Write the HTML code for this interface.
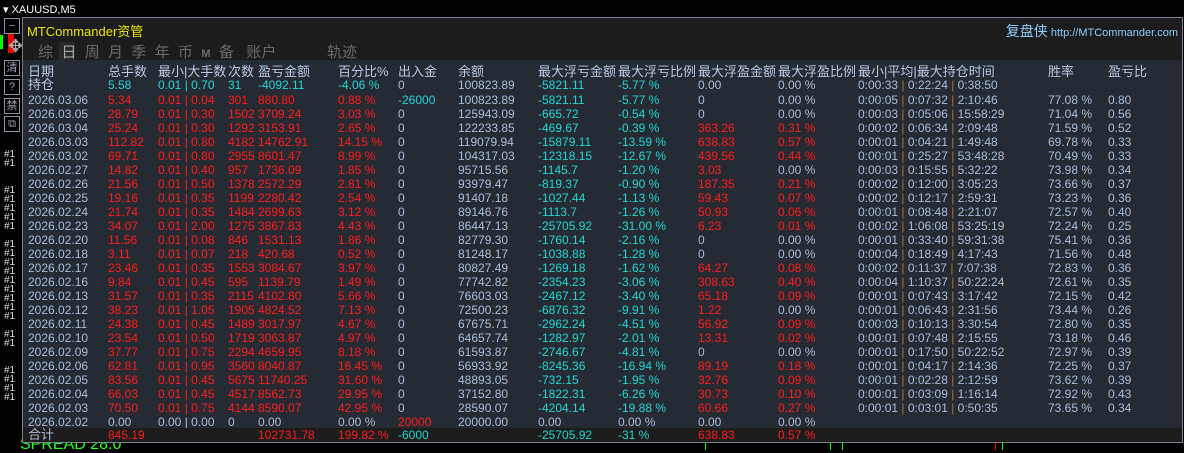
<!DOCTYPE html>
<html><head><meta charset="utf-8"><style>
*{margin:0;padding:0;box-sizing:border-box}
body{width:1184px;height:450px;background:#000;position:relative;overflow:hidden;font-family:"Liberation Sans","Noto Sans CJK SC",sans-serif;font-size:12px;color:#a9bdd8}
.abs{position:absolute;white-space:nowrap}
#panel{position:absolute;left:22px;top:17px;width:1161px;height:426px;border:1px solid #7a8290;background:#1c1c1c}
#tbl{position:absolute;left:0;top:42px;width:1159px;height:368px;background:#262b33}
#foot{position:absolute;left:0;top:410px;width:1159px;height:14px;background:#1c1c1c}
.r{position:absolute;left:0;height:14px;line-height:14px;width:1159px}
.r span{position:absolute;white-space:nowrap}
.a{left:5px}.b{left:85px}.c{left:135px}.d{left:205px}.e{left:235px}.f{left:315px}.g{left:375px}.h{left:435px}.i{left:515px}.j{left:595px}.k{left:675px}.l{left:755px}.m{left:835px}.n{left:1025px}.o{left:1085px}
.R{color:#ff1a1a}.C{color:#1fd6d6}
.p{color:#b07030;font-style:normal}
.hd{font-size:13px;color:#b8c8e0}
.tab{color:#6a6a6a;font-size:15px}
.btn{position:absolute;left:4px;width:16px;height:16px;border:1px solid #8a94a4;color:#9aa4b4;font-size:11px;line-height:14px;text-align:center;background:#000}
</style></head><body>
<div class="abs" style="left:3px;top:3px;color:#fff;font-size:11px">▾ XAUUSD,M5</div>
<div class="abs" style="left:0;top:35px;width:3px;height:14px;background:#0f0"></div>
<div class="abs" style="left:8px;top:33px;width:6px;height:20px;background:#e00"></div>
<div class="abs" style="left:8px;top:36px;color:#aaa;font-size:18px">✥</div>
<div class="btn" style="top:18px">−</div>
<div class="btn" style="top:60px">清</div>
<div class="btn" style="top:79px">?</div>
<div class="btn" style="top:98px">禁</div>
<div class="btn" style="top:116px">⧉</div>
<div class="abs" style="left:4px;top:150px;color:#ddd;font-size:10px;line-height:9px">#1<br>#1<br><br><br>#1<br>#1<br>#1<br>#1<br>#1<br><br>#1<br>#1<br>#1<br>#1<br>#1<br>#1<br>#1<br>#1<br>#1<br><br>#1<br>#1<br><br><br>#1<br>#1<br>#1<br>#1</div>
<div class="abs" style="left:20px;top:438px;color:#2f2;font-size:16px;line-height:14px">SPREAD 28.0</div>
<div class="abs" style="left:705px;top:443px;width:1px;height:7px;background:#0f0"></div>
<div class="abs" style="left:830px;top:443px;width:1px;height:7px;background:#0f0"></div>
<div class="abs" style="left:842px;top:443px;width:1px;height:7px;background:#0f0"></div>
<div class="abs" style="left:995px;top:443px;width:1px;height:7px;background:#f00"></div>
<div class="abs" style="left:1002px;top:443px;width:1px;height:7px;background:#0f0"></div>
<div id="panel">
<div class="abs" style="left:4px;top:3px;color:#e8e800;font-size:13px">MTCommander资管</div>
<div class="abs" style="right:4px;top:3px;color:#8ecbff;font-size:11px"><span style="font-size:14px">复盘侠</span> http://MTCommander.com</div>
<div class="abs" style="left:36px;top:24px;width:16px;height:18px;background:#2a2a2a"></div>
<div class="abs tab" style="left:15px;top:23px">综&nbsp;&nbsp;<span style="color:#9aa">日</span>&nbsp;&nbsp;周&nbsp;&nbsp;月&nbsp;&nbsp;季&nbsp;&nbsp;年&nbsp;&nbsp;币&nbsp;&nbsp;<b style="font-size:11px">M</b>&nbsp;&nbsp;备&nbsp;&nbsp;&nbsp;账户</div>
<div class="abs tab" style="left:304px;top:23px">轨迹</div>
<div id="tbl">
<div class="r hd" style="top:5px"><span class="a">日期</span><span class="b">总手数</span><span class="c">最小|大手数</span><span class="d">次数</span><span class="e">盈亏金额</span><span class="f">百分比%</span><span class="g">出入金</span><span class="h">余额</span><span class="i">最大浮亏金额</span><span class="j">最大浮亏比例</span><span class="k">最大浮盈金额</span><span class="l">最大浮盈比例</span><span class="m">最小|平均|最大持仓时间</span><span class="n">胜率</span><span class="o">盈亏比</span></div>
<div class="r" style="top:18px"><span class="a hd">持仓</span><span class="b C">5.58</span><span class="c C">0.01 | 0.70</span><span class="d C">31</span><span class="e C">-4092.11</span><span class="f C">-4.06 %</span><span class="g">0</span><span class="h">100823.89</span><span class="i C">-5821.11</span><span class="j C">-5.77 %</span><span class="k">0.00</span><span class="l">0.00 %</span><span class="m">0:00:33 <i class="p">|</i> 0:22:24 <i class="p">|</i> 0:38:50</span></div>
<div class="r" style="top:33px"><span class="a">2026.03.06</span><span class="b R">5.34</span><span class="c R">0.01 | 0.04</span><span class="d R">301</span><span class="e R">880.80</span><span class="f R">0.88 %</span><span class="g C">-26000</span><span class="h">100823.89</span><span class="i C">-5821.11</span><span class="j C">-5.77 %</span><span class="k">0</span><span class="l">0.00 %</span><span class="m">0:00:05 <i class="p">|</i> 0:07:32 <i class="p">|</i> 2:10:46</span><span class="n">77.08 %</span><span class="o">0.80</span></div>
<div class="r" style="top:47px"><span class="a">2026.03.05</span><span class="b R">28.79</span><span class="c R">0.01 | 0.30</span><span class="d R">1502</span><span class="e R">3709.24</span><span class="f R">3.03 %</span><span class="g">0</span><span class="h">125943.09</span><span class="i C">-665.72</span><span class="j C">-0.54 %</span><span class="k">0</span><span class="l">0.00 %</span><span class="m">0:00:03 <i class="p">|</i> 0:05:06 <i class="p">|</i> 15:58:29</span><span class="n">71.04 %</span><span class="o">0.56</span></div>
<div class="r" style="top:61px"><span class="a">2026.03.04</span><span class="b R">25.24</span><span class="c R">0.01 | 0.30</span><span class="d R">1292</span><span class="e R">3153.91</span><span class="f R">2.65 %</span><span class="g">0</span><span class="h">122233.85</span><span class="i C">-469.67</span><span class="j C">-0.39 %</span><span class="k R">363.26</span><span class="l R">0.31 %</span><span class="m">0:00:02 <i class="p">|</i> 0:06:34 <i class="p">|</i> 2:09:48</span><span class="n">71.59 %</span><span class="o">0.52</span></div>
<div class="r" style="top:75px"><span class="a">2026.03.03</span><span class="b R">112.82</span><span class="c R">0.01 | 0.80</span><span class="d R">4182</span><span class="e R">14762.91</span><span class="f R">14.15 %</span><span class="g">0</span><span class="h">119079.94</span><span class="i C">-15879.11</span><span class="j C">-13.59 %</span><span class="k R">638.83</span><span class="l R">0.57 %</span><span class="m">0:00:01 <i class="p">|</i> 0:04:21 <i class="p">|</i> 1:49:48</span><span class="n">69.78 %</span><span class="o">0.33</span></div>
<div class="r" style="top:89px"><span class="a">2026.03.02</span><span class="b R">69.71</span><span class="c R">0.01 | 0.80</span><span class="d R">2955</span><span class="e R">8601.47</span><span class="f R">8.99 %</span><span class="g">0</span><span class="h">104317.03</span><span class="i C">-12318.15</span><span class="j C">-12.67 %</span><span class="k R">439.56</span><span class="l R">0.44 %</span><span class="m">0:00:01 <i class="p">|</i> 0:25:27 <i class="p">|</i> 53:48:28</span><span class="n">70.49 %</span><span class="o">0.33</span></div>
<div class="r" style="top:103px"><span class="a">2026.02.27</span><span class="b R">14.82</span><span class="c R">0.01 | 0.40</span><span class="d R">957</span><span class="e R">1736.09</span><span class="f R">1.85 %</span><span class="g">0</span><span class="h">95715.56</span><span class="i C">-1145.7</span><span class="j C">-1.20 %</span><span class="k R">3.03</span><span class="l">0.00 %</span><span class="m">0:00:03 <i class="p">|</i> 0:15:55 <i class="p">|</i> 5:32:22</span><span class="n">73.98 %</span><span class="o">0.34</span></div>
<div class="r" style="top:117px"><span class="a">2026.02.26</span><span class="b R">21.56</span><span class="c R">0.01 | 0.50</span><span class="d R">1378</span><span class="e R">2572.29</span><span class="f R">2.81 %</span><span class="g">0</span><span class="h">93979.47</span><span class="i C">-819.37</span><span class="j C">-0.90 %</span><span class="k R">187.35</span><span class="l R">0.21 %</span><span class="m">0:00:02 <i class="p">|</i> 0:12:00 <i class="p">|</i> 3:05:23</span><span class="n">73.66 %</span><span class="o">0.37</span></div>
<div class="r" style="top:131px"><span class="a">2026.02.25</span><span class="b R">19.16</span><span class="c R">0.01 | 0.35</span><span class="d R">1199</span><span class="e R">2280.42</span><span class="f R">2.54 %</span><span class="g">0</span><span class="h">91407.18</span><span class="i C">-1027.44</span><span class="j C">-1.13 %</span><span class="k R">59.43</span><span class="l R">0.07 %</span><span class="m">0:00:02 <i class="p">|</i> 0:12:17 <i class="p">|</i> 2:59:31</span><span class="n">73.23 %</span><span class="o">0.36</span></div>
<div class="r" style="top:145px"><span class="a">2026.02.24</span><span class="b R">21.74</span><span class="c R">0.01 | 0.35</span><span class="d R">1484</span><span class="e R">2699.63</span><span class="f R">3.12 %</span><span class="g">0</span><span class="h">89146.76</span><span class="i C">-1113.7</span><span class="j C">-1.26 %</span><span class="k R">50.93</span><span class="l R">0.06 %</span><span class="m">0:00:01 <i class="p">|</i> 0:08:48 <i class="p">|</i> 2:21:07</span><span class="n">72.57 %</span><span class="o">0.40</span></div>
<div class="r" style="top:159px"><span class="a">2026.02.23</span><span class="b R">34.07</span><span class="c R">0.01 | 2.00</span><span class="d R">1275</span><span class="e R">3867.83</span><span class="f R">4.43 %</span><span class="g">0</span><span class="h">86447.13</span><span class="i C">-25705.92</span><span class="j C">-31.00 %</span><span class="k R">6.23</span><span class="l R">0.01 %</span><span class="m">0:00:02 <i class="p">|</i> 1:06:08 <i class="p">|</i> 53:25:19</span><span class="n">72.24 %</span><span class="o">0.25</span></div>
<div class="r" style="top:173px"><span class="a">2026.02.20</span><span class="b R">11.56</span><span class="c R">0.01 | 0.08</span><span class="d R">846</span><span class="e R">1531.13</span><span class="f R">1.86 %</span><span class="g">0</span><span class="h">82779.30</span><span class="i C">-1760.14</span><span class="j C">-2.16 %</span><span class="k">0</span><span class="l">0.00 %</span><span class="m">0:00:01 <i class="p">|</i> 0:33:40 <i class="p">|</i> 59:31:38</span><span class="n">75.41 %</span><span class="o">0.36</span></div>
<div class="r" style="top:187px"><span class="a">2026.02.18</span><span class="b R">3.11</span><span class="c R">0.01 | 0.07</span><span class="d R">218</span><span class="e R">420.68</span><span class="f R">0.52 %</span><span class="g">0</span><span class="h">81248.17</span><span class="i C">-1038.88</span><span class="j C">-1.28 %</span><span class="k">0</span><span class="l">0.00 %</span><span class="m">0:00:04 <i class="p">|</i> 0:18:49 <i class="p">|</i> 4:17:43</span><span class="n">71.56 %</span><span class="o">0.48</span></div>
<div class="r" style="top:201px"><span class="a">2026.02.17</span><span class="b R">23.46</span><span class="c R">0.01 | 0.35</span><span class="d R">1553</span><span class="e R">3084.67</span><span class="f R">3.97 %</span><span class="g">0</span><span class="h">80827.49</span><span class="i C">-1269.18</span><span class="j C">-1.62 %</span><span class="k R">64.27</span><span class="l R">0.08 %</span><span class="m">0:00:02 <i class="p">|</i> 0:11:37 <i class="p">|</i> 7:07:38</span><span class="n">72.83 %</span><span class="o">0.36</span></div>
<div class="r" style="top:215px"><span class="a">2026.02.16</span><span class="b R">9.84</span><span class="c R">0.01 | 0.45</span><span class="d R">595</span><span class="e R">1139.79</span><span class="f R">1.49 %</span><span class="g">0</span><span class="h">77742.82</span><span class="i C">-2354.23</span><span class="j C">-3.06 %</span><span class="k R">308.63</span><span class="l R">0.40 %</span><span class="m">0:00:04 <i class="p">|</i> 1:10:37 <i class="p">|</i> 50:22:24</span><span class="n">72.61 %</span><span class="o">0.35</span></div>
<div class="r" style="top:229px"><span class="a">2026.02.13</span><span class="b R">31.57</span><span class="c R">0.01 | 0.35</span><span class="d R">2115</span><span class="e R">4102.80</span><span class="f R">5.66 %</span><span class="g">0</span><span class="h">76603.03</span><span class="i C">-2467.12</span><span class="j C">-3.40 %</span><span class="k R">65.18</span><span class="l R">0.09 %</span><span class="m">0:00:01 <i class="p">|</i> 0:07:43 <i class="p">|</i> 3:17:42</span><span class="n">72.15 %</span><span class="o">0.42</span></div>
<div class="r" style="top:243px"><span class="a">2026.02.12</span><span class="b R">38.23</span><span class="c R">0.01 | 1.05</span><span class="d R">1905</span><span class="e R">4824.52</span><span class="f R">7.13 %</span><span class="g">0</span><span class="h">72500.23</span><span class="i C">-6876.32</span><span class="j C">-9.91 %</span><span class="k R">1.22</span><span class="l">0.00 %</span><span class="m">0:00:01 <i class="p">|</i> 0:06:43 <i class="p">|</i> 2:31:56</span><span class="n">73.44 %</span><span class="o">0.26</span></div>
<div class="r" style="top:257px"><span class="a">2026.02.11</span><span class="b R">24.38</span><span class="c R">0.01 | 0.45</span><span class="d R">1489</span><span class="e R">3017.97</span><span class="f R">4.67 %</span><span class="g">0</span><span class="h">67675.71</span><span class="i C">-2962.24</span><span class="j C">-4.51 %</span><span class="k R">56.92</span><span class="l R">0.09 %</span><span class="m">0:00:03 <i class="p">|</i> 0:10:13 <i class="p">|</i> 3:30:54</span><span class="n">72.80 %</span><span class="o">0.35</span></div>
<div class="r" style="top:271px"><span class="a">2026.02.10</span><span class="b R">23.54</span><span class="c R">0.01 | 0.50</span><span class="d R">1719</span><span class="e R">3063.87</span><span class="f R">4.97 %</span><span class="g">0</span><span class="h">64657.74</span><span class="i C">-1282.97</span><span class="j C">-2.01 %</span><span class="k R">13.31</span><span class="l R">0.02 %</span><span class="m">0:00:01 <i class="p">|</i> 0:07:48 <i class="p">|</i> 2:15:55</span><span class="n">73.18 %</span><span class="o">0.46</span></div>
<div class="r" style="top:285px"><span class="a">2026.02.09</span><span class="b R">37.77</span><span class="c R">0.01 | 0.75</span><span class="d R">2294</span><span class="e R">4659.95</span><span class="f R">8.18 %</span><span class="g">0</span><span class="h">61593.87</span><span class="i C">-2746.67</span><span class="j C">-4.81 %</span><span class="k">0</span><span class="l">0.00 %</span><span class="m">0:00:01 <i class="p">|</i> 0:17:50 <i class="p">|</i> 50:22:52</span><span class="n">72.97 %</span><span class="o">0.39</span></div>
<div class="r" style="top:299px"><span class="a">2026.02.06</span><span class="b R">62.81</span><span class="c R">0.01 | 0.95</span><span class="d R">3560</span><span class="e R">8040.87</span><span class="f R">16.45 %</span><span class="g">0</span><span class="h">56933.92</span><span class="i C">-8245.36</span><span class="j C">-16.94 %</span><span class="k R">89.19</span><span class="l R">0.18 %</span><span class="m">0:00:01 <i class="p">|</i> 0:04:17 <i class="p">|</i> 2:14:36</span><span class="n">72.25 %</span><span class="o">0.37</span></div>
<div class="r" style="top:313px"><span class="a">2026.02.05</span><span class="b R">83.56</span><span class="c R">0.01 | 0.45</span><span class="d R">5675</span><span class="e R">11740.25</span><span class="f R">31.60 %</span><span class="g">0</span><span class="h">48893.05</span><span class="i C">-732.15</span><span class="j C">-1.95 %</span><span class="k R">32.76</span><span class="l R">0.09 %</span><span class="m">0:00:01 <i class="p">|</i> 0:02:28 <i class="p">|</i> 2:12:59</span><span class="n">73.62 %</span><span class="o">0.39</span></div>
<div class="r" style="top:327px"><span class="a">2026.02.04</span><span class="b R">66.03</span><span class="c R">0.01 | 0.45</span><span class="d R">4517</span><span class="e R">8562.73</span><span class="f R">29.95 %</span><span class="g">0</span><span class="h">37152.80</span><span class="i C">-1822.31</span><span class="j C">-6.26 %</span><span class="k R">30.73</span><span class="l R">0.10 %</span><span class="m">0:00:01 <i class="p">|</i> 0:03:09 <i class="p">|</i> 1:16:14</span><span class="n">72.92 %</span><span class="o">0.43</span></div>
<div class="r" style="top:341px"><span class="a">2026.02.03</span><span class="b R">70.50</span><span class="c R">0.01 | 0.75</span><span class="d R">4144</span><span class="e R">8590.07</span><span class="f R">42.95 %</span><span class="g">0</span><span class="h">28590.07</span><span class="i C">-4204.14</span><span class="j C">-19.88 %</span><span class="k R">60.66</span><span class="l R">0.27 %</span><span class="m">0:00:01 <i class="p">|</i> 0:03:01 <i class="p">|</i> 0:50:35</span><span class="n">73.65 %</span><span class="o">0.34</span></div>
<div class="r" style="top:355px"><span class="a">2026.02.02</span><span class="b">0.00</span><span class="c">0.00 | 0.00</span><span class="d">0</span><span class="e">0.00</span><span class="f">0.00 %</span><span class="g R">20000</span><span class="h">20000.00</span><span class="i">0.00</span><span class="j">0.00 %</span><span class="k">0.00</span><span class="l">0.00 %</span></div>
</div>
<div id="foot"><div class="r" style="top:0"><span class="a" style="font-size:13px">合计</span><span class="b R">845.19</span><span class="e R">102731.78</span><span class="f R">199.82 %</span><span class="g C">-6000</span><span class="i C">-25705.92</span><span class="j C">-31 %</span><span class="k R">638.83</span><span class="l R">0.57 %</span></div></div>
</div>
</body></html>
